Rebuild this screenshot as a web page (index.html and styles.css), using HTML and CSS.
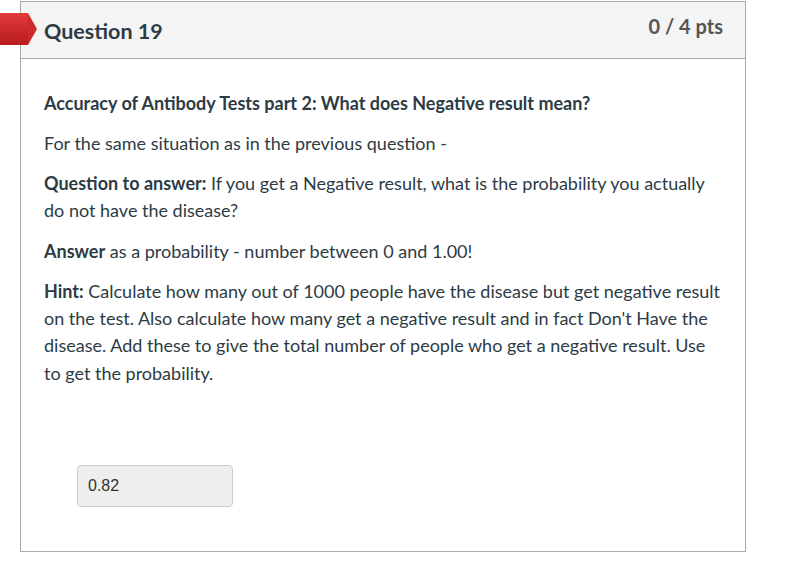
FILE: index.html
```html
<!DOCTYPE html>
<html lang="en">
  <head>
    <meta charset="UTF-8" />
    <title>Question 19</title>
    <link rel="stylesheet" href="styles.css">
  </head>
  <body>
    <div class="question">
      <div class="flag"></div>
      <div class="header">
        <h2>Question 19</h2>
        <span class="points">0 / 4 pts</span>
      </div>

      <div class="text">
        <p><strong>Accuracy of Antibody Tests part 2: What does Negative result mean?</strong></p>
        <p>For the same situation as in the previous question -</p>
        <p><strong>Question to answer:</strong> If you get a Negative result, what is the probability you actually do not have the disease?</p>
        <p><strong>Answer</strong> as a probability - number between 0 and 1.00!</p>
        <p><strong>Hint:</strong> Calculate how many out of 1000 people have the disease but get negative result on the test. Also calculate how many get a negative result and in fact Don't Have the disease. Add these to give the total number of people who get a negative result. Use to get the probability.</p>

        <div class="answer">
          <input type="text" value="0.82" readonly />
        </div>
      </div>
    </div>
  </body>
</html>
```

FILE: styles.css
```css
body {
  font-family: Lato, "Open Sans", sans-serif;
  color: #2d3b45;
  background-color: #fff;
  margin: 0;
  padding: 1px 0 0 20px;
}

.question {
  position: relative;
  width: 724px;
  height: 549px;
  border: 1px solid #aaa;
}

.flag {
  position: absolute;
  left: -21px;
  top: 11px;
  width: 28px;
  height: 32px;
  background: linear-gradient(#e0393c, #b81c1f);
}

.flag::after {
  content: "";
  position: absolute;
  left: 28px;
  top: 0;
  border-top: 16px solid transparent;
  border-bottom: 16px solid transparent;
  border-left: 9px solid #cc2a2d;
}

.header {
  display: flex;
  justify-content: space-between;
  align-items: flex-start;
  height: 56px;
  padding: 0 22px 0 23px;
  background-color: #f4f4f4;
  border-bottom: 1px solid #aaa;
}

.header h2 {
  margin: 15px 0 0;
  font-size: 21.5px;
  font-weight: bold;
  line-height: 28px;
}

.points {
  margin-top: 10px;
  font-size: 20px;
  font-weight: bold;
  line-height: 28px;
  color: #555;
}

.text {
  padding: 31px 23px 0;
  font-size: 18px;
  line-height: 27.3px;
}

.text p {
  margin: 0 0 12.8px;
}

.text strong {
  font-weight: bold;
}

.answer {
  padding: 65px 0 0 33px;
}

.answer input {
  width: 156px;
  height: 42px;
  box-sizing: border-box;
  padding: 0 10px;
  font-family: "Liberation Sans", Arial, sans-serif;
  font-size: 16px;
  color: #333;
  background-color: #eee;
  border: 1px solid #ccc;
  border-radius: 4px;
}
```
